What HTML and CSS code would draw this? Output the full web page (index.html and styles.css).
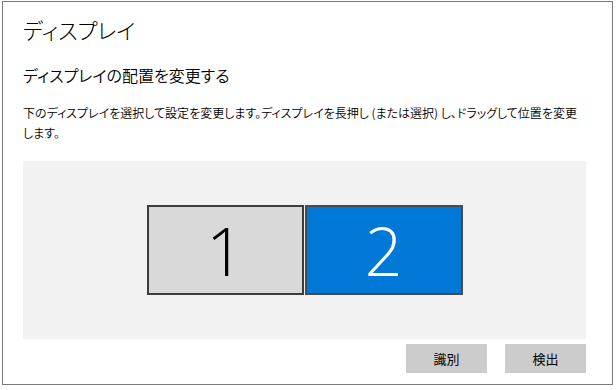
FILE: index.html
```html
<!DOCTYPE html>
<html lang="ja">

<head>
    <meta charset="UTF-8" />
    <meta name="viewport" content="width=device-width, initial-scale=1" />
    <title>ディスプレイ</title>
    <link rel="stylesheet" href="styles.css">
</head>

<body>
    <div class="window">
        <h1 class="title">ディスプレイ</h1>
        <h2 class="subtitle">ディスプレイの配置を変更する</h2>
        <p class="desc">下のディスプレイを選択して設定を変更します。ディスプレイを長押し (または選択) し、ドラッグして位置を変更します。</p>

        <div class="arrange">
            <div class="monitor">1</div>
            <div class="monitor selected">2</div>
        </div>

        <div class="actions">
            <button class="btn">識別</button>
            <button class="btn">検出</button>
        </div>
    </div>
</body>

</html>
```

FILE: styles.css
```css
:root {
    --text-color: #000;
    --accent: #0078d7;
    --font: "Noto Sans CJK JP", "Noto Sans", sans-serif;
}

html,
body {
    margin: 0;
    padding: 0;
    background: #fff;
}

body {
    font-family: var(--font);
    font-feature-settings: "palt";
    color: var(--text-color);
}

/* 枠 */
.window {
    box-sizing: border-box;
    width: 611px;
    height: 384px;
    margin: 1px 0 0 2px;
    padding: 0 26px 0 20px;
    border: 1px solid #7a7a7a;
    display: flex;
    flex-direction: column;
}

.title {
    margin: 13px 0 0;
    font-size: 21.5px;
    font-weight: 300;
    line-height: 30px;
}

.subtitle {
    margin: 18px 0 0;
    font-size: 16px;
    font-weight: 350;
    line-height: 24px;
}

.desc {
    margin: 16px 0 0;
    font-size: 12px;
    font-weight: 350;
    line-height: 20px;
}

/* 配置エリア */
.arrange {
    margin-top: 18px;
    height: 178px;
    background: #f2f2f2;
    display: flex;
    justify-content: center;
    align-items: center;
    gap: 1px;
}

.monitor {
    box-sizing: border-box;
    width: 157px;
    height: 90px;
    border: 2px solid #3c3c3c;
    background: #d9d9d9;
    display: flex;
    justify-content: center;
    align-items: center;
    font-family: "Open Sans", "Noto Sans", sans-serif;
    font-weight: 300;
    font-size: 66px;
    color: #000;
}

.monitor.selected {
    width: 158px;
    border-color: #4a4a4a;
    background: var(--accent);
    color: #fff;
}

.actions {
    margin-top: 5px;
    display: flex;
    justify-content: flex-end;
    gap: 18px;
}

.btn {
    width: 81px;
    height: 29px;
    border: none;
    background: #cccccc;
    font-family: var(--font);
    font-size: 13px;
    color: #000;
    padding: 0;
}
```
